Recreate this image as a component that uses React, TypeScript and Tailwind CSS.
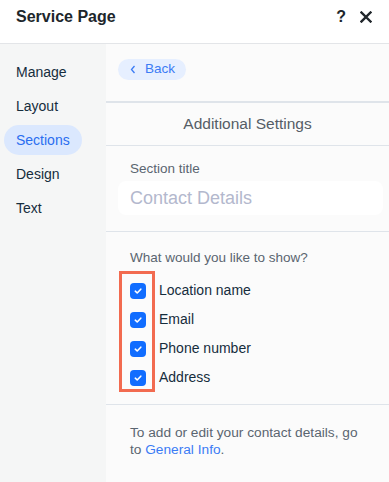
import React from "react";

const items = ["Manage", "Layout", "Sections", "Design", "Text"];
const checks = ["Location name", "Email", "Phone number", "Address"];

function Check() {
  return (
    <div className="w-[16px] h-[16px] rounded-[4px] bg-[#116dff] flex items-center justify-center shrink-0">
      <svg width="10" height="10" viewBox="0 0 10 10" fill="none">
        <path d="M2.3 5.2 L4.2 7 L7.8 3.2" stroke="white" strokeWidth="1.6" strokeLinecap="round" strokeLinejoin="round" />
      </svg>
    </div>
  );
}

export default function App() {
  return (
    <div
      className="w-[389px] h-[482px] bg-white flex flex-col overflow-hidden text-[#162d3d]"
      style={{ fontFamily: '"Liberation Sans", Arial, sans-serif' }}
    >
      <div className="h-[44px] shrink-0 flex items-start justify-between pl-[16px] pr-[17px] pt-[7px] border-b border-[#e3e5e8]">
        <div className="text-[16px] font-bold text-[#20262b] leading-[20px]">Service Page</div>
        <div className="flex items-center gap-[14px] leading-[20px]">
          <span className="text-[16px] font-bold text-[#20262b]">?</span>
          <svg width="12" height="12" viewBox="0 0 12 12">
            <path d="M1.5 1.5 L10.5 10.5 M10.5 1.5 L1.5 10.5" stroke="#20262b" strokeWidth="2.4" strokeLinecap="square" />
          </svg>
        </div>
      </div>
      <div className="flex flex-1 min-h-0">
        <div className="w-[106px] shrink-0 bg-[#f5f6f6] flex flex-col gap-[4px] pt-[13px] pl-[4px]">
          {items.map((it) => (
            <div
              key={it}
              className={
                "h-[30px] w-[78px] rounded-full flex items-center pl-[12px] text-[14px] " +
                (it === "Sections" ? "bg-[#dbe8fe] text-[#2a6ef0]" : "text-[#162d3d]")
              }
            >
              {it}
            </div>
          ))}
        </div>
        <div className="flex-1 bg-[#fbfbfb] flex flex-col">
          <div className="h-[59px] shrink-0 pt-[15px] pl-[12px] border-b-2 border-[#dfe4ea]">
            <div className="h-[21px] w-[68px] rounded-full bg-[#e6efff] flex items-center pl-[12px] gap-[9px] text-[#3b7cf5] text-[13.5px]">
              <svg width="6" height="9" viewBox="0 0 6 9">
                <path d="M4.5 1 L1.5 4.5 L4.5 8" stroke="#3b7cf5" strokeWidth="1.3" fill="none" />
              </svg>
              <span>Back</span>
            </div>
          </div>
          <div className="h-[43px] shrink-0 flex items-center justify-center border-b border-[#dfe4ea] text-[15.5px] text-[#555d66]">
            Additional Settings
          </div>
          <div className="h-[86px] shrink-0 border-b border-[#dfe4ea] pt-[14px] px-[12px] pr-[6px]">
            <div className="text-[13.5px] text-[#5a6570] leading-[18px] pl-[12px]">Section title</div>
            <div className="mt-[3px] h-[34px] rounded-[8px] bg-white flex items-center pl-[12px] text-[18px] text-[#b3b8cd]">
              Contact Details
            </div>
          </div>
          <div className="relative h-[173px] shrink-0 border-b border-[#dfe4ea] pt-[17px] pl-[24px]">
            <div className="text-[13.5px] text-[#5a6570] leading-[18px]">What would you like to show?</div>
            <div className="mt-[9px] flex flex-col">
              {checks.map((c) => (
                <div key={c} className="h-[29px] flex items-center gap-[13px] text-[14px] text-[#162d3d]">
                  <Check />
                  <span>{c}</span>
                </div>
              ))}
            </div>
            <div className="absolute left-[13px] top-[39px] w-[36px] h-[121px] border-[3px] border-[#f26b50]" />
          </div>
          <div className="pt-[19px] pl-[24px] pr-[20px] text-[13.7px] leading-[17px] text-[#5a6570]">
            To add or edit your contact details, go
            <br />
            to <span className="text-[#3b7cf5]">General Info</span>.
          </div>
        </div>
      </div>
    </div>
  );
}
